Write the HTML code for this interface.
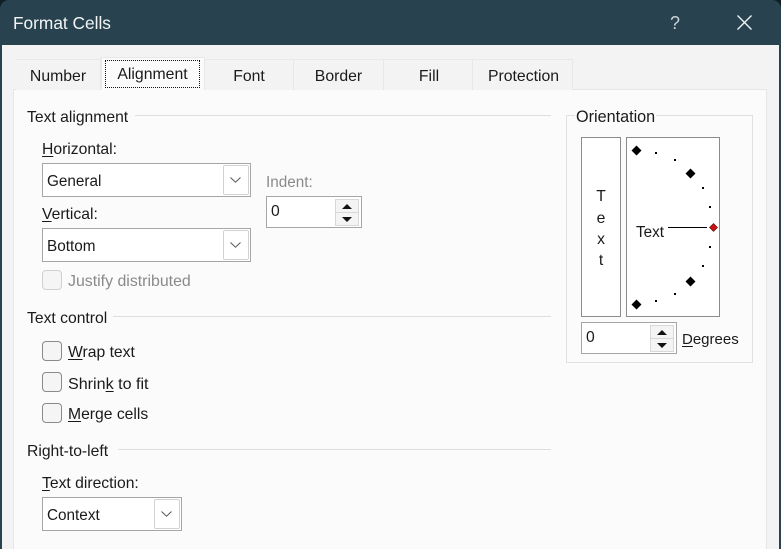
<!DOCTYPE html>
<html>
<head>
<meta charset="utf-8">
<style>
html{margin:0;padding:0;width:781px;height:549px;overflow:hidden;background:#101e25;}
body{margin:0;padding:0;width:781px;height:549px;overflow:hidden;position:relative;font-family:"Liberation Sans",sans-serif;font-size:15.7px;color:#1a1a1a;}
.a{position:absolute;box-sizing:border-box;}
.t{position:absolute;white-space:nowrap;line-height:20px;height:20px;margin-top:1px;}
.c{text-align:center;}
.v{font-size:15.3px;}
u{text-underline-offset:2px;text-decoration-thickness:1px;}
.tab{position:absolute;box-sizing:border-box;top:59px;height:31px;background:#f3f3f3;border:1px solid #e8e8e8;border-bottom:none;border-left:none;text-align:center;line-height:32px;white-space:nowrap;font-size:15.8px;}
.line{position:absolute;height:1px;background:#dedede;}
.combo{position:absolute;box-sizing:border-box;background:#fff;border:1px solid #a6a6a6;height:34px;}
.btn{position:absolute;box-sizing:border-box;background:#fff;border:1px solid #d2d2d2;border-radius:2px;}
.spin{position:absolute;box-sizing:border-box;background:#fff;border:1px solid #a6a6a6;width:96px;height:32px;}
.sb{position:absolute;box-sizing:border-box;background:#f4f4f4;border:1px solid #d8d8d8;width:24px;}
.chk{position:absolute;box-sizing:border-box;left:42px;width:20px;height:20px;background:#f5f5f5;border:1px solid #8a8a8a;border-radius:4px;}
svg{position:absolute;display:block;overflow:visible;}
.dis{color:#8a8a8a;}
</style>
</head>
<body>
<!-- Window -->
<div class="a" style="left:0;top:0;width:781px;height:549px;background:#28434f;border-radius:9px 9px 0 0;"></div>
<div class="a" style="left:2px;top:45px;width:777px;height:504px;background:#f3f3f3;"></div>
<div class="t" style="left:13px;top:12px;font-size:17.3px;color:#f2f5f6;">Format Cells</div>
<div class="t" style="left:670px;top:12px;font-size:18px;color:#c9d2d6;">?</div>
<svg style="left:0;top:0;" width="781" height="45"><path d="M737.5 15.5 L751.5 29.5 M751.5 15.5 L737.5 29.5" stroke="#f0f3f4" stroke-width="1.4" fill="none"/></svg>

<!-- Panel -->
<div class="a" style="left:13px;top:89px;width:754px;height:460px;background:#fbfbfc;border:1px solid #e6e6e6;border-bottom:none;"></div>

<!-- Tabs -->
<div class="tab" style="left:16px;width:85px;line-height:33px;">Number</div>
<div class="tab" style="left:205px;width:89px;line-height:33px;">Font</div>
<div class="tab" style="left:294px;width:90px;line-height:33px;">Border</div>
<div class="tab" style="left:384px;width:89px;line-height:33px;padding-left:2px;">Fill</div>
<div class="tab" style="left:473px;width:100px;line-height:33px;padding-left:2px;">Protection</div>
<div class="a" style="left:101px;top:57px;width:104px;height:33px;background:#fbfbfc;border:1px solid #e8e8e8;border-bottom:none;"></div>
<div class="a" style="left:105px;top:60px;width:95px;height:28px;border:1px dotted #111;text-align:center;line-height:27px;white-space:nowrap;font-size:15.8px;">Alignment</div>

<!-- Text alignment -->
<div class="t" style="left:27px;top:107px;">Text alignment</div>
<div class="line" style="left:135px;top:115px;width:416px;"></div>
<div class="t" style="left:42px;top:139px;"><u>H</u>orizontal:</div>
<div class="combo" style="left:42px;top:163px;width:209px;"></div>
<div class="t v" style="left:47px;top:171px;">General</div>
<div class="btn" style="left:223px;top:165px;width:26px;height:30px;"></div>
<svg style="left:230px;top:177px;" width="12" height="6"><path d="M0.5 0.5 L5.5 5.2 L10.5 0.5" stroke="#555" stroke-width="1" fill="none"/></svg>

<div class="t" style="left:42px;top:204px;"><u>V</u>ertical:</div>
<div class="combo" style="left:42px;top:228px;width:209px;"></div>
<div class="t v" style="left:47px;top:236px;">Bottom</div>
<div class="btn" style="left:223px;top:230px;width:26px;height:30px;"></div>
<svg style="left:230px;top:242px;" width="12" height="6"><path d="M0.5 0.5 L5.5 5.2 L10.5 0.5" stroke="#555" stroke-width="1" fill="none"/></svg>

<div class="chk" style="top:270px;border-color:#cfcfcf;"></div>
<div class="t dis" style="left:68px;top:271px;font-size:15.9px;">Justify distributed</div>

<div class="t dis v" style="left:266px;top:172px;">Indent:</div>
<div class="spin" style="left:266px;top:196px;"></div>
<div class="t" style="left:271px;top:201px;">0</div>
<div class="sb" style="left:335px;top:199px;height:14px;"></div>
<div class="sb" style="left:335px;top:212px;height:14px;"></div>
<svg style="left:335px;top:199px;" width="24" height="27"><path d="M12 5 L17 10 L7 10 Z M7 18 L17 18 L12 23 Z" fill="#111"/></svg>

<!-- Text control -->
<div class="t" style="left:27px;top:308px;">Text control</div>
<div class="line" style="left:113px;top:316px;width:438px;"></div>
<div class="chk" style="top:341px;"></div>
<div class="t" style="left:68px;top:342px;"><u>W</u>rap text</div>
<div class="chk" style="top:372px;"></div>
<div class="t" style="left:68px;top:373px;font-size:16.1px;">Shrin<u>k</u> to fit</div>
<div class="chk" style="top:403px;"></div>
<div class="t" style="left:68px;top:404px;"><u>M</u>erge cells</div>

<!-- Right-to-left -->
<div class="t" style="left:27px;top:441px;">Right-to-left</div>
<div class="line" style="left:118px;top:449px;width:433px;"></div>
<div class="t" style="left:42px;top:473px;"><u>T</u>ext direction:</div>
<div class="combo" style="left:42px;top:497px;width:140px;"></div>
<div class="t v" style="left:47px;top:505px;">Context</div>
<div class="btn" style="left:154px;top:499px;width:26px;height:30px;"></div>
<svg style="left:161px;top:511px;" width="12" height="6"><path d="M0.5 0.5 L5.5 5.2 L10.5 0.5" stroke="#555" stroke-width="1" fill="none"/></svg>

<!-- Orientation -->
<div class="a" style="left:566px;top:115px;width:187px;height:248px;border:1px solid #e0e0e0;"></div>
<div class="t" style="left:575px;top:107px;padding:0 1px;background:#fbfbfc;font-size:16.2px;height:14px;line-height:18px;">Orientation</div>
<div class="a" style="left:581px;top:137px;width:40px;height:180px;background:#fff;border:1px solid #8c8c8c;"></div>
<div class="t c" style="left:581px;width:40px;top:186px;">T</div>
<div class="t c" style="left:581px;width:40px;top:208px;">e</div>
<div class="t c" style="left:581px;width:40px;top:229px;">x</div>
<div class="t c" style="left:581px;width:40px;top:250px;">t</div>
<div class="a" style="left:626px;top:137px;width:94px;height:180px;background:#fff;border:1px solid #8c8c8c;"></div>
<div class="t v" style="left:636px;top:222px;">Text</div>
<svg style="left:0;top:0;" width="781" height="549">
<path d="M636.5 145.5 L641.5 150.5 L636.5 155.5 L631.5 150.5 Z M690.5 168.5 L695.5 173.5 L690.5 178.5 L685.5 173.5 Z M690.5 276.5 L695.5 281.5 L690.5 286.5 L685.5 281.5 Z M636.5 299.5 L641.5 304.5 L636.5 309.5 L631.5 304.5 Z" fill="#000"/>
<path d="M655 152h2v2h-2z M674 159h2v2h-2z M702 187h2v2h-2z M709 206h2v2h-2z M709 246h2v2h-2z M702 265h2v2h-2z M674 293h2v2h-2z M655 300h2v2h-2z" fill="#000"/>
<path d="M668 227.5 H707" stroke="#000" stroke-width="1" fill="none"/>
<path d="M713.5 223.5 L717.5 227.5 L713.5 231.5 L709.5 227.5 Z" fill="#d01010" stroke="#5a0808" stroke-width="0.6"/>
</svg>
<div class="spin" style="left:581px;top:322px;"></div>
<div class="t" style="left:586px;top:327px;">0</div>
<div class="sb" style="left:650px;top:325px;height:14px;"></div>
<div class="sb" style="left:650px;top:338px;height:14px;"></div>
<svg style="left:650px;top:325px;" width="24" height="27"><path d="M12 5 L17 10 L7 10 Z M7 18 L17 18 L12 23 Z" fill="#111"/></svg>
<div class="t" style="left:682px;top:329px;font-size:15px;"><u>D</u>egrees</div>
</body>
</html>
